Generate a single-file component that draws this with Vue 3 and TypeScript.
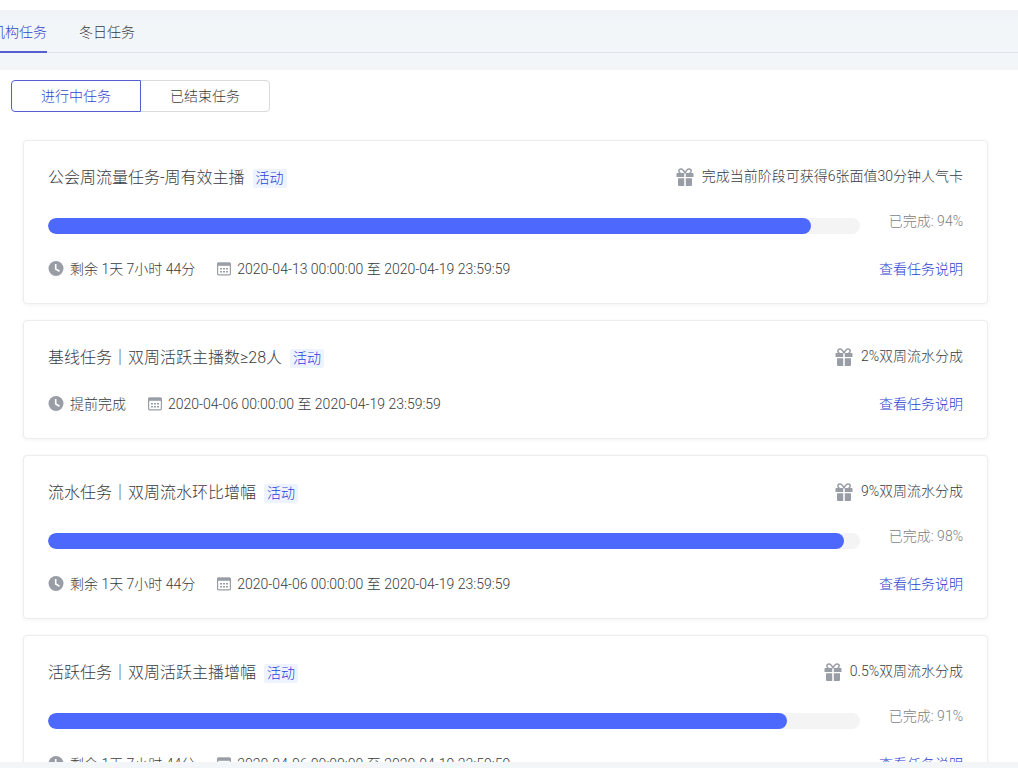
<script setup lang="ts">
import { ref } from 'vue'

interface Task {
  id: number
  title: string
  reward: string
  progress?: number
  status: string
  start: string
  end: string
}

const tabs = ['机构任务', '冬日任务']
const filters = ['进行中任务', '已结束任务']
const activeTab = ref(0)
const activeFilter = ref(0)

const tasks: Task[] = [
  {
    id: 1,
    title: '公会周流量任务-周有效主播',
    reward: '完成当前阶段可获得6张面值30分钟人气卡',
    progress: 94,
    status: '剩余 1天 7小时 44分',
    start: '2020-04-13 00:00:00',
    end: '2020-04-19 23:59:59',
  },
  {
    id: 2,
    title: '基线任务｜双周活跃主播数≥28人',
    reward: '2%双周流水分成',
    status: '提前完成',
    start: '2020-04-06 00:00:00',
    end: '2020-04-19 23:59:59',
  },
  {
    id: 3,
    title: '流水任务｜双周流水环比增幅',
    reward: '9%双周流水分成',
    progress: 98,
    status: '剩余 1天 7小时 44分',
    start: '2020-04-06 00:00:00',
    end: '2020-04-19 23:59:59',
  },
  {
    id: 4,
    title: '活跃任务｜双周活跃主播增幅',
    reward: '0.5%双周流水分成',
    progress: 91,
    status: '剩余 1天 7小时 44分',
    start: '2020-04-06 00:00:00',
    end: '2020-04-19 23:59:59',
  },
]
</script>

<template>
  <div class="page">
    <header class="header">
      <nav class="tabs" role="tablist">
        <button
          v-for="(tab, i) in tabs"
          :key="tab"
          type="button"
          role="tab"
          class="tab"
          :class="{ active: activeTab === i }"
          :aria-selected="activeTab === i"
          @click="activeTab = i"
        >{{ tab }}</button>
      </nav>
    </header>

    <main class="panel">
      <div class="filters">
        <button
          v-for="(filter, i) in filters"
          :key="filter"
          type="button"
          class="filter"
          :class="{ active: activeFilter === i }"
          :aria-pressed="activeFilter === i"
          @click="activeFilter = i"
        >{{ filter }}</button>
      </div>

      <section class="list">
        <article v-for="task in tasks" :key="task.id" class="card">
          <div class="row head">
            <h2 class="title">{{ task.title }}</h2>
            <span class="tag">活动</span>
            <div class="reward">
              <svg class="gift" viewBox="0 0 18 18" aria-hidden="true">
                <g fill="none" stroke="currentColor" stroke-width="1.5">
                  <path d="M9 5.2C7.8 2.4 6.6 1 5 1 3.6 1 2.8 1.9 2.8 3c0 1 .7 1.7 1.6 2.2" />
                  <path d="M9 5.2C10.2 2.4 11.4 1 13 1c1.4 0 2.2.9 2.2 2 0 1-.7 1.7-1.6 2.2" />
                </g>
                <path fill="currentColor" d="M1.3 4.9h6.9v4.1H.5V5.7q0-.8.8-.8zM9.8 4.9h6.9q.8 0 .8.8V9H9.8zM2 10.2h6.2V18H3q-1 0-1-1zM9.8 10.2H16V17q0 1-1 1H9.8z" />
              </svg>
              <span class="reward-text">{{ task.reward }}</span>
            </div>
          </div>

          <div v-if="task.progress !== undefined" class="progress">
            <div
              class="track"
              role="progressbar"
              aria-valuemin="0"
              aria-valuemax="100"
              :aria-valuenow="task.progress"
              :aria-label="task.title"
            >
              <div class="fill" :style="{ width: task.progress + '%' }"></div>
            </div>
            <span class="percent">已完成: {{ task.progress }}%</span>
          </div>

          <div class="row meta">
            <svg class="clock" viewBox="0 0 16 16" aria-hidden="true">
              <circle cx="8" cy="7.5" r="7.5" fill="currentColor" />
              <path d="M7.7 3v5l3.8 2.2" fill="none" stroke="#fff" stroke-width="1.6" />
            </svg>
            <span class="status">{{ task.status }}</span>
            <svg class="calendar" viewBox="0 0 14 14" aria-hidden="true">
              <rect x=".6" y="1" width="12.8" height="11.8" rx="1" fill="none" stroke="currentColor" stroke-width="1.2" />
              <path d="M.6 .6h12.8v3.2H.6z" fill="currentColor" />
              <path fill="currentColor" d="M3 6h2v1.5H3zM6 6h2v1.5H6zM9 6h2v1.5H9zM3 9h2v1.5H3zM6 9h2v1.5H6zM9 9h2v1.5H9z" />
            </svg>
            <span>{{ task.start }} 至 {{ task.end }}</span>
            <a class="link" href="#">查看任务说明</a>
          </div>
        </article>
      </section>
    </main>
  </div>
</template>

<style>
body {
  margin: 0;
  background: #f3f6f9;
}
</style>

<style scoped>
.page {
  box-sizing: border-box;
  height: 100vh;
  padding: 10px 0 6px;
  display: flex;
  flex-direction: column;
  overflow: hidden;
  background: linear-gradient(#fff 10px, #f3f6f9 10px);
  color: #383b3f;
  font-family: Roboto, "Noto Sans CJK SC", sans-serif;
  font-size: 14px;
  font-weight: 300;
  line-height: 22px;
}

button {
  font: inherit;
  color: inherit;
  cursor: pointer;
}

.header {
  flex: none;
  padding-bottom: 17px;
  background: linear-gradient(#eef2f6, #f3f6f9 12px);
}

.tabs {
  display: flex;
  gap: 32px;
  margin-left: -9px;
  border-bottom: 1px solid #dfe3ea;
}

.tab {
  height: 43px;
  margin-bottom: -1px;
  padding: 2px 0 0;
  border: 0;
  border-bottom: 2px solid transparent;
  background: none;
}

.tab.active {
  color: #3644d0;
  border-bottom-color: #5460cf;
}

.panel {
  flex: 1;
  min-height: 0;
  padding: 10px 30px 0 11px;
  overflow: hidden;
  background: #fff;
}

.filters {
  display: flex;
}

.filter {
  box-sizing: border-box;
  width: 130px;
  height: 32px;
  padding: 0;
  border: 1px solid #d9d9dd;
  border-radius: 0 4px 4px 0;
  background: #fff;
}

.filter:first-child {
  border-radius: 4px 0 0 4px;
}

.filter + .filter {
  margin-left: -1px;
}

.filter.active {
  position: relative;
  color: #3644d0;
  border-color: #5460cf;
}

.list {
  display: flex;
  flex-direction: column;
  gap: 16px;
  margin: 28px 0 0 12px;
}

.card {
  padding: 24px 24px 23px;
  border: 1px solid #ededf0;
  border-radius: 4px;
  box-shadow: 0 1px 4px rgba(0, 0, 0, 0.05);
  background: #fff;
}

.row {
  display: flex;
  align-items: center;
}

.head {
  height: 24px;
}

.title {
  margin: 0;
  padding-top: 2px;
  font-size: 16px;
  font-weight: 300;
  line-height: 24px;
}

.tag {
  margin: 2px 0 0 8px;
  padding: 0 3px;
  border-radius: 2px;
  background: #eef4ff;
  color: #2c40dc;
  line-height: 19px;
}

.reward {
  display: flex;
  align-items: center;
  gap: 8px;
  margin-left: auto;
}

.reward-text {
  padding-bottom: 2px;
}

.gift {
  width: 18px;
  height: 18px;
  color: #999da6;
}

.progress {
  display: flex;
  height: 21px;
  margin-top: 24px;
}

.track {
  flex: 1;
  align-self: flex-end;
  height: 16px;
  border-radius: 8px;
  background: #f4f4f4;
  overflow: hidden;
}

.fill {
  height: 100%;
  border-radius: 8px;
  background: #4c68fd;
}

.percent {
  width: 103px;
  color: #7c7e84;
  line-height: 16px;
  text-align: right;
  white-space: nowrap;
}

.meta {
  height: 22px;
  margin-top: 24px;
}

.clock {
  width: 16px;
  height: 16px;
  margin-right: 6px;
  color: #999da6;
}

.calendar {
  width: 14px;
  height: 14px;
  margin: 0 6px 0 22px;
  color: #999da6;
}

.link {
  margin-left: auto;
  color: #2c40d0;
  text-decoration: none;
}
</style>
